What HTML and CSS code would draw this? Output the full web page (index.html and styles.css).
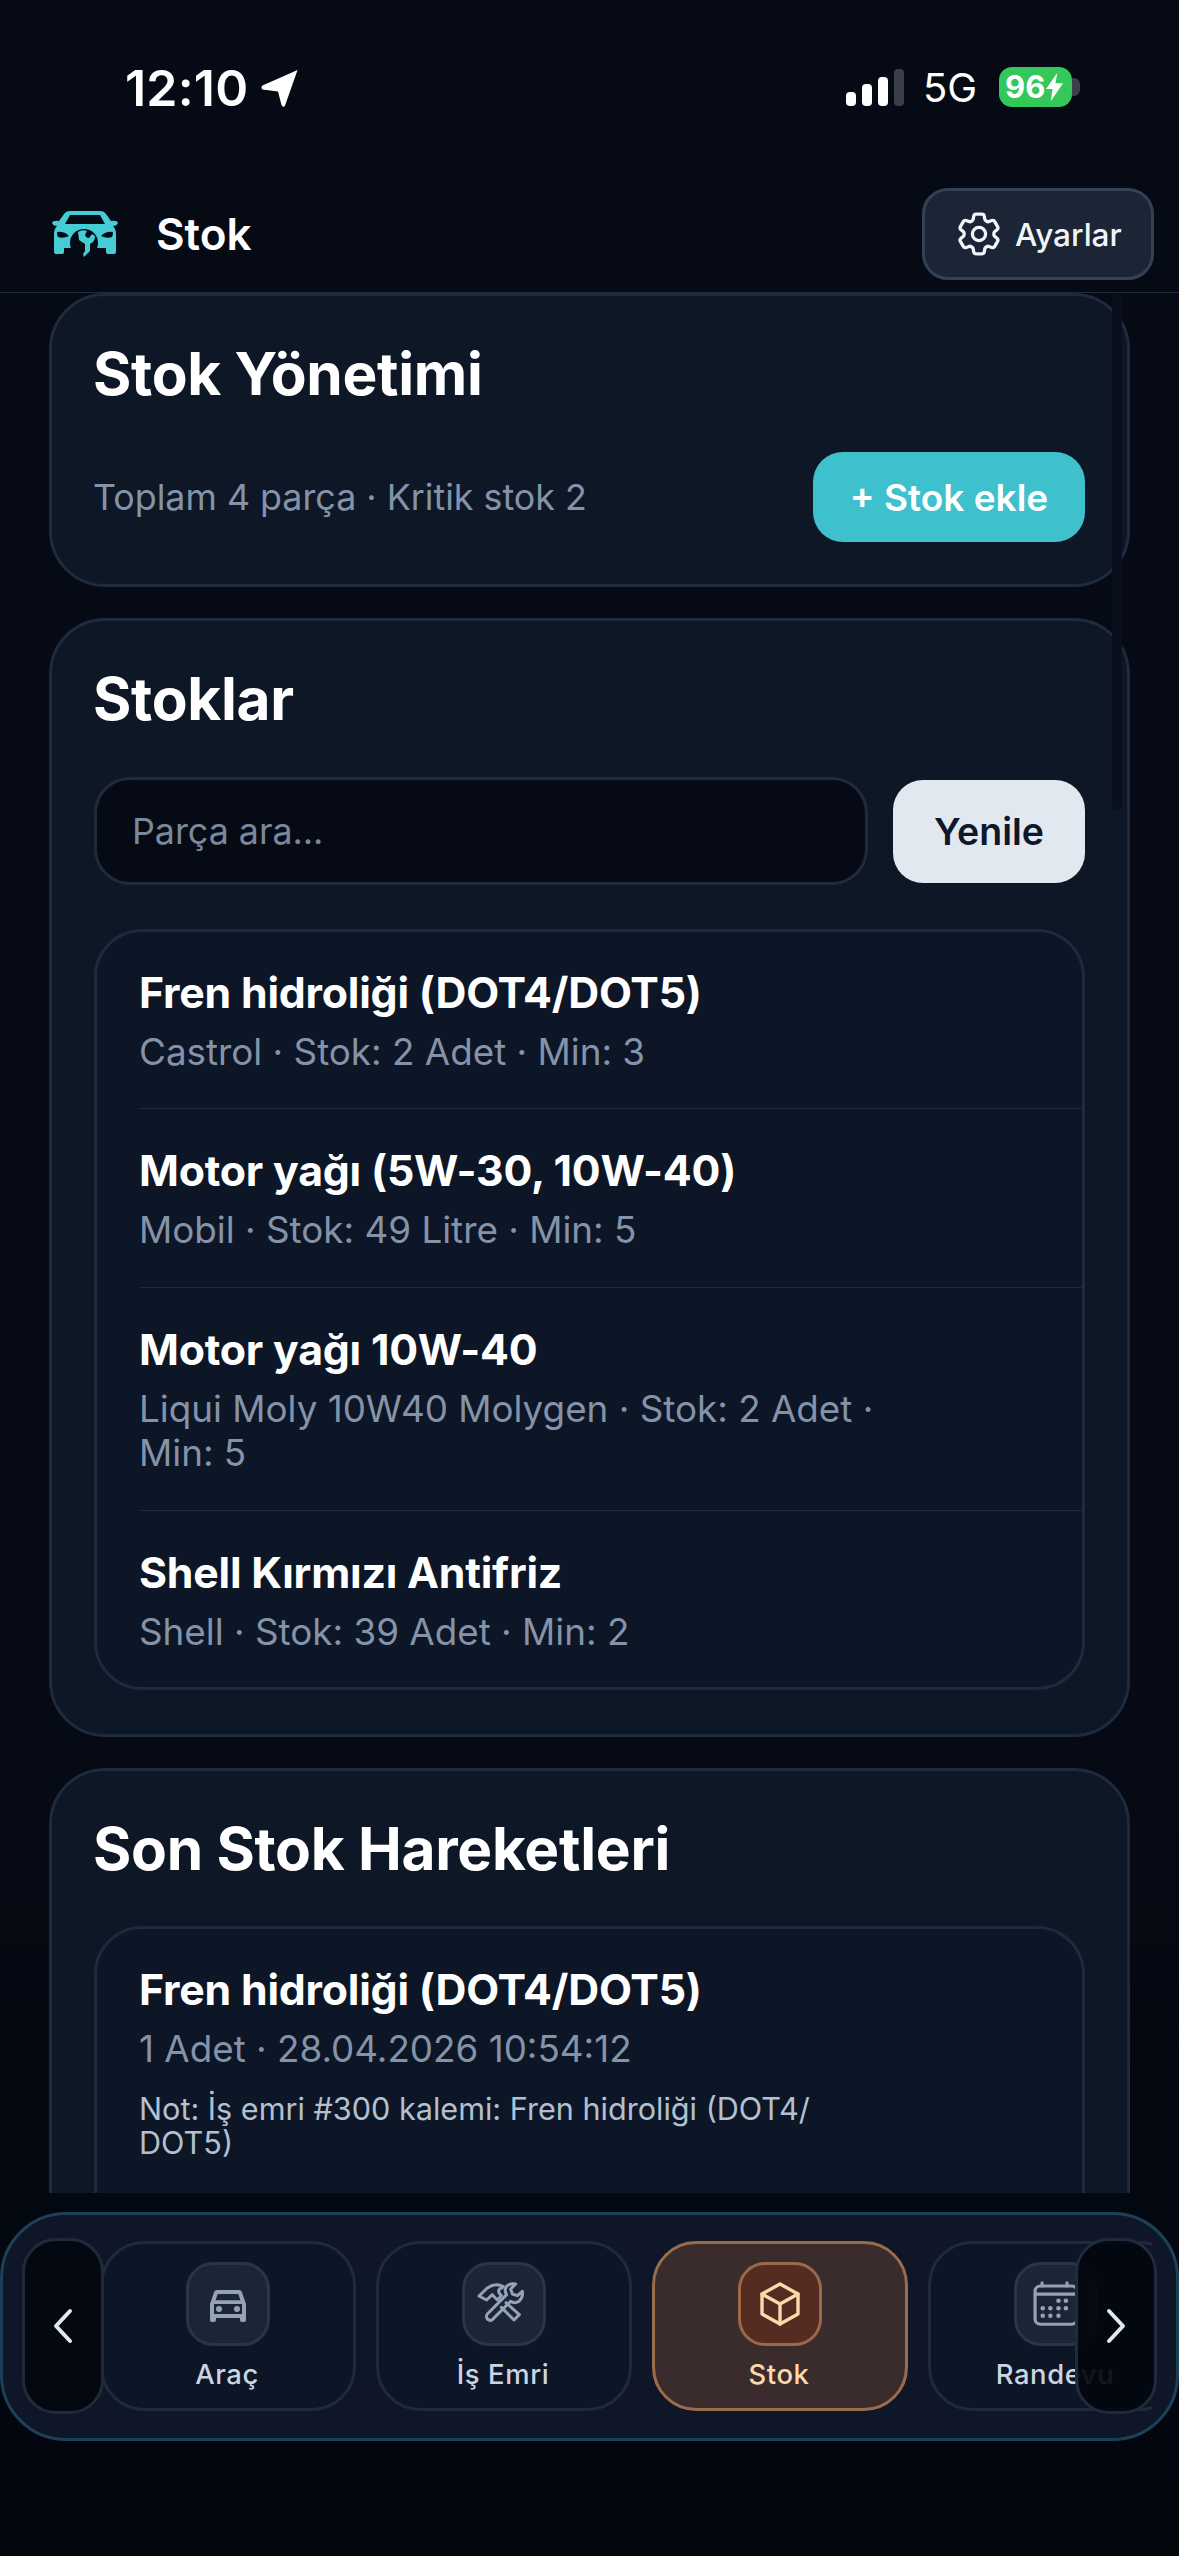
FILE: index.html
```html
<!DOCTYPE html>
<html lang="tr">
<head>
  <meta charset="UTF-8" />
  <meta name="viewport" content="width=device-width, initial-scale=1.0"/>
  <title>Stok</title>
  <link rel="stylesheet" href="styles.css">
</head>
<body>
  <div class="app">

    <!-- status bar -->
    <div class="status">
      <div class="status-left">
        <span class="clock">12:10</span>
        <svg class="loc" viewBox="0 0 40 40"><path d="M38 1 L25 38 Q23 40 21.500 37 L18 23 L2 21 Q0 19 2 17 Z" fill="#fff"/></svg>
      </div>
      <div class="status-right">
        <div class="signal">
          <span class="bar bar1"></span>
          <span class="bar bar2"></span>
          <span class="bar bar3"></span>
          <span class="bar bar4"></span>
        </div>
        <span class="net">5G</span>
        <div class="battery">
          <span class="batt-num">96</span>
          <svg class="bolt" viewBox="0 0 18 30"><path d="M12 0 L0 17 H7 L5 30 L18 11 H10 Z" fill="#fff"/></svg>
          <span class="batt-cap"></span>
        </div>
      </div>
    </div>

    <!-- top bar -->
    <header class="topbar">
      <div class="brand">
        <svg class="brand-logo" viewBox="0 0 66 46">
          <path fill="#45cdd6" fill-rule="evenodd" d="M18 0 H48 Q52 0 54 3 L59 10 Q65 9 66 12 Q65 15 61 15 Q64 18 64 23 V41 Q64 43 62 43 H56 Q54 43 54 41 V37 H12 V41 Q12 43 10 43 H4 Q2 43 2 41 V23 Q2 18 5 15 Q1 15 0 12 Q1 9 7 10 L12 3 Q14 0 18 0 Z M18 4 L13 13 H53 L48 4 Z M5 21 Q12 20 17 25 Q11 28 6 26 Q5 24 5 21 Z M61 21 Q54 20 49 25 Q55 28 60 26 Q61 24 61 21 Z"/>
          <circle cx="32" cy="32" r="14" fill="#050a14"/>
          <path fill="#45cdd6" d="M26 21 L27 29 L33 33 L33 40 L31 43 L32 46 L35 43 L38 40 L38 33 Q43 31 43 25 L40 23 L37 27 Q34 27 33 24 L35 20 Q30 18 26 21 Z"/>
        </svg>
        <span class="brand-name">Stok</span>
      </div>
      <button class="settings-btn">
        <svg class="gear" viewBox="2 2 20 20" fill="none" stroke="#f1f5f9" stroke-width="1.500" stroke-linejoin="round">
          <path d="M9.594 3.940c.09-.542.56-.94 1.110-.94h2.593c.55 0 1.020.398 1.110.94l.213 1.281c.063.374.313.686.645.870.074.04.147.083.22.127.325.196.72.257 1.075.124l1.217-.456a1.125 1.125 0 0 1 1.370.49l1.296 2.247a1.125 1.125 0 0 1-.26 1.431l-1.003.827c-.293.241-.438.613-.43.992a7.723 7.723 0 0 1 0 .255c-.008.378.137.75.43.991l1.004.827c.424.35.534.955.26 1.430l-1.298 2.247a1.125 1.125 0 0 1-1.369.491l-1.217-.456c-.355-.133-.75-.072-1.076.124a6.470 6.470 0 0 1-.22.128c-.331.183-.581.495-.644.869l-.213 1.281c-.09.543-.56.94-1.110.94h-2.594c-.55 0-1.019-.398-1.110-.94l-.213-1.281c-.062-.374-.312-.686-.644-.87a6.520 6.520 0 0 1-.22-.127c-.325-.196-.72-.257-1.076-.124l-1.217.456a1.125 1.125 0 0 1-1.369-.49l-1.297-2.247a1.125 1.125 0 0 1 .26-1.431l1.004-.827c.292-.24.437-.613.43-.991a6.932 6.932 0 0 1 0-.255c.007-.38-.138-.751-.43-.992l-1.004-.827a1.125 1.125 0 0 1-.26-1.430l1.297-2.247a1.125 1.125 0 0 1 1.370-.491l1.216.456c.356.133.751.072 1.076-.124.072-.044.146-.086.22-.128.332-.183.582-.495.644-.869l.214-1.280Z"/>
          <circle cx="12" cy="12" r="3"/>
        </svg>
        Ayarlar
      </button>
    </header>

    <!-- scrolling content -->
    <main class="content">
      <span class="scroll-thumb"></span>

      <section class="card">
        <h2>Stok Yönetimi</h2>
        <div class="summary">
          <p class="summary-text">Toplam 4 parça · Kritik stok 2</p>
          <button class="add-btn">+ Stok ekle</button>
        </div>
      </section>

      <section class="card">
        <h2>Stoklar</h2>
        <div class="search">
          <input class="search-input" type="text" placeholder="Parça ara..." />
          <button class="refresh-btn">Yenile</button>
        </div>
        <div class="list stock-list">
          <div class="row">
            <h3>Fren hidroliği (DOT4/DOT5)</h3>
            <p class="meta">Castrol · Stok: 2 Adet · Min: 3</p>
          </div>
          <div class="row">
            <h3>Motor yağı (5W-30, 10W-40)</h3>
            <p class="meta">Mobil · Stok: 49 Litre · Min: 5</p>
          </div>
          <div class="row">
            <h3>Motor yağı 10W-40</h3>
            <p class="meta">Liqui Moly 10W40 Molygen · Stok: 2 Adet · Min: 5</p>
          </div>
          <div class="row">
            <h3>Shell Kırmızı Antifriz</h3>
            <p class="meta">Shell · Stok: 39 Adet · Min: 2</p>
          </div>
        </div>
      </section>

      <section class="card">
        <h2>Son Stok Hareketleri</h2>
        <div class="list moves-list">
          <div class="row">
            <h3>Fren hidroliği (DOT4/DOT5)</h3>
            <p class="meta">1 Adet · 28.04.2026 10:54:12</p>
            <p class="note">Not: İş emri #300 kalemi: Fren hidroliği (DOT4/<wbr>DOT5)</p>
          </div>
        </div>
      </section>
    </main>

    <!-- bottom nav -->
    <nav class="dock">
      <div class="dock-scroll">
        <a class="tile">
          <span class="tile-icon">
            <svg viewBox="0 0 24 24" fill="#94a3b8"><path d="M18.920 6.010C18.720 5.420 18.160 5 17.500 5h-11c-.66 0-1.210.42-1.420 1.010L3 12v8c0 .55.45 1 1 1h1c.55 0 1-.45 1-1v-1h12v1c0 .55.45 1 1 1h1c.55 0 1-.45 1-1v-8l-2.080-5.990zM6.850 7h10.290l1.080 3.110H5.770L6.850 7zM19 17H5v-5h14v5z"/><circle cx="7.500" cy="14.500" r="1.500"/><circle cx="16.500" cy="14.500" r="1.500"/></svg>
          </span>
          <span class="tile-label">Araç</span>
        </a>
        <a class="tile">
          <span class="tile-icon">
            <svg viewBox="48 48 144 144" fill="none" stroke="#94a3b8" stroke-width="9" stroke-linejoin="round" stroke-linecap="round">
              <path d="M45 96 L70 72 Q95 55 118 68 L106 76 Q100 85 112 95 L100 108 L85 92 L68 108 Z"/>
              <path d="M126 116 L166 152 L150 168 L112 130"/>
              <path d="M128 92 Q118 75 130 65 Q140 57 155 60 L140 75 L145 90 L160 95 L175 82 Q178 100 165 112 Q152 120 140 112 L85 167 Q78 172 70 165 Q65 157 70 150 Z"/>
            </svg>
          </span>
          <span class="tile-label">İş Emri</span>
        </a>
        <a class="tile tile-active">
          <span class="tile-icon">
            <svg viewBox="0 0 24 24" fill="none" stroke="#fed7aa" stroke-width="1.700" stroke-linejoin="round" stroke-linecap="round">
              <path d="M12 2 L21 7 V17 L12 22 L3 17 V7 Z"/>
              <path d="M3 7 L12 12 L21 7 M12 12 V22"/>
            </svg>
          </span>
          <span class="tile-label">Stok</span>
        </a>
        <a class="tile">
          <span class="tile-icon">
            <svg class="icon-cal" viewBox="0 0 24 24" fill="none" stroke="#94a3b8" stroke-width="1.400" stroke-linecap="round" stroke-linejoin="round">
              <rect x="2.700" y="4" width="18.600" height="17" rx="2.300"/>
              <path d="M5.800 2.600V4M16.900 2.600V4M2.700 7.600H21.300"/>
              <g fill="#94a3b8" stroke="none"><circle cx="13.100" cy="10.500" r="1"/><circle cx="16.400" cy="10.500" r="1"/><circle cx="6.100" cy="13.900" r="1"/><circle cx="9.500" cy="13.900" r="1"/><circle cx="13.100" cy="13.900" r="1"/><circle cx="16.400" cy="13.900" r="1"/><circle cx="6.100" cy="17.200" r="1"/><circle cx="9.500" cy="17.200" r="1"/><circle cx="13.100" cy="17.200" r="1"/></g>
            </svg>
          </span>
          <span class="tile-label">Randevu</span>
        </a>
      </div>
      <button class="dock-arrow dock-prev">
        <svg viewBox="0 0 20 36" fill="none" stroke="#e2e8f0" stroke-width="4" stroke-linecap="round" stroke-linejoin="round"><path d="M17 3 L3 18 L17 33"/></svg>
      </button>
      <button class="dock-arrow dock-next">
        <svg viewBox="0 0 20 36" fill="none" stroke="#e2e8f0" stroke-width="4" stroke-linecap="round" stroke-linejoin="round"><path d="M3 3 L17 18 L3 33"/></svg>
      </button>
    </nav>
  </div>
</body>
</html>
```

FILE: styles.css
```css
* {
  box-sizing: border-box;
}
html, body {
  margin: 0;
  padding: 0;
}
body {
  font-family: Inter, "Noto Sans", sans-serif;
  background: #050a14;
  color: #fff;
}
h2, h3, p {
  margin: 0;
}
button {
  font-family: inherit;
  border: none;
  padding: 0;
}
.app {
  width: 1179px;
  height: 2556px;
  overflow: hidden;
  display: flex;
  flex-direction: column;
  background: linear-gradient(180deg, #050a14 0%, #050a14 70%, #02050c 100%);
}

/* status bar */
.status {
  height: 176px;
  flex: none;
  display: flex;
  justify-content: space-between;
  padding: 62px 107px 0 125px;
}
.status-left {
  display: flex;
  align-items: flex-start;
  gap: 12px;
}
.clock {
  font-size: 50px;
  font-weight: 600;
  line-height: 52px;
  letter-spacing: 0.200px;
}
.loc {
  width: 40px;
  height: 39px;
  margin-top: 7px;
}
.status-right {
  display: flex;
  align-items: flex-start;
  padding-top: 5px;
}
.signal {
  display: flex;
  align-items: flex-end;
  gap: 6px;
  height: 37px;
  margin-top: 2px;
}
.bar {
  width: 10px;
  border-radius: 4px;
  background: #fff;
}
.bar1 { height: 14px; }
.bar2 { height: 22px; }
.bar3 { height: 29px; }
.bar4 { height: 37px; background: #3a3f48; }
.net {
  width: 54px;
  font-size: 40px;
  line-height: 40px;
  margin: 1px 22px 0 19px;
  color: #fff;
}
.battery {
  position: relative;
  width: 73px;
  height: 40px;
  background: #34c759;
  border-radius: 13px;
  display: flex;
  align-items: center;
  padding-left: 6px;
  gap: 1px;
}
.batt-num {
  font-size: 31px;
  font-weight: 700;
  line-height: 40px;
}
.bolt {
  width: 17px;
  height: 30px;
}
.batt-cap {
  position: absolute;
  left: 73px;
  top: 11px;
  width: 8px;
  height: 18px;
  border-radius: 0 6px 6px 0;
  background: #3a3f48;
}

/* top bar */
.topbar {
  height: 117px;
  flex: none;
  display: flex;
  align-items: center;
  justify-content: space-between;
  padding: 0 25px 0 52px;
  border-bottom: 1px solid #1e293b;
}
.brand {
  display: flex;
  align-items: center;
  gap: 38px;
}
.brand-logo {
  width: 66px;
  height: 46px;
}
.brand-name {
  font-size: 44px;
  font-weight: 600;
}
.settings-btn {
  width: 232px;
  height: 92px;
  display: flex;
  align-items: center;
  gap: 14px;
  padding-left: 32px;
  background: #1b2535;
  border: 3px solid #334155;
  border-radius: 26px;
  color: #f1f5f9;
  font-size: 31.500px;
  font-weight: 500;
}
.gear {
  width: 44px;
  height: 44px;
}

/* content */
.content {
  position: relative;
  height: 1900px;
  flex: none;
  overflow: hidden;
  padding: 0 49px;
  display: flex;
  flex-direction: column;
  gap: 31px;
}
.scroll-thumb {
  position: absolute;
  top: 0;
  left: 1112px;
  width: 10px;
  height: 517px;
  border-radius: 5px;
  background: #090f1b;
}
.card {
  flex: none;
  padding: 43px 42px 44px;
  background: #0d1726;
  border: 3px solid #1e2a3d;
  border-radius: 56px;
}
.card h2 {
  margin-left: -1px;
  font-size: 58.600px;
  font-weight: 700;
  line-height: 70px;
  letter-spacing: -0.300px;
}
.summary {
  display: flex;
  align-items: center;
  justify-content: space-between;
  margin: 43px 0 -2px;
}
.summary-text {
  margin-left: -1px;
  font-size: 35.800px;
  color: #8493a8;
}
.add-btn {
  width: 272px;
  height: 90px;
  background: #3fc1cd;
  border-radius: 30px;
  color: #fff;
  font-size: 37px;
  font-weight: 600;
}
.search {
  display: flex;
  align-items: center;
  gap: 25px;
  margin-top: 43px;
}
.search-input {
  flex: 1;
  min-width: 0;
  height: 108px;
  padding: 0 35px;
  background: #060a14;
  border: 3px solid #1f2a3c;
  border-radius: 36px;
  font-family: inherit;
  font-size: 35.800px;
  color: #fff;
}
.search-input::placeholder {
  color: #7a889c;
  opacity: 1;
}
.refresh-btn {
  flex: none;
  width: 192px;
  height: 103px;
  background: #e2e8f0;
  border-radius: 30px;
  color: #0f172a;
  font-size: 37.500px;
  font-weight: 600;
}
.list {
  padding-left: 42px;
  background: #0c1626;
  border: 3px solid #1e2a3d;
  border-radius: 48px;
}
.stock-list {
  margin-top: 44px;
}
.moves-list {
  margin-top: 42px;
  min-height: 330px;
}
.row {
  padding: 37px 0 35px;
  border-bottom: 1px solid #1e2a3d;
}
.row:first-child {
  padding: 36px 0 34px;
}
.row:last-child {
  padding-bottom: 33px;
  border-bottom: none;
}
.row h3 {
  font-size: 42.800px;
  font-weight: 650;
  line-height: 50px;
  letter-spacing: -0.200px;
}
.meta {
  max-width: 745px;
  margin-top: 12px;
  font-size: 36.800px;
  line-height: 44px;
  color: #8493a8;
}
.note {
  max-width: 745px;
  margin-top: 21px;
  font-size: 30.600px;
  line-height: 34px;
  color: #b4c0d0;
}

/* dock */
.dock {
  position: relative;
  height: 229px;
  flex: none;
  margin-top: 19px;
  padding: 26px 24px;
  background: #0e1628;
  border: 3px solid #1c4058;
  border-radius: 66px;
}
.dock-scroll {
  display: flex;
  gap: 20px;
  width: 1125px;
  overflow: hidden;
  padding-left: 73px;
}
.tile {
  flex: none;
  width: 256px;
  height: 170px;
  display: flex;
  flex-direction: column;
  align-items: center;
  padding-top: 18px;
  background: #0c1627;
  border: 3px solid #1f2b3d;
  border-radius: 44px;
}
.tile-icon {
  width: 84px;
  height: 84px;
  display: flex;
  align-items: center;
  justify-content: center;
  background: #1b2536;
  border: 3px solid #2a3648;
  border-radius: 27px;
}
.tile-icon svg {
  flex: none;
  width: 48px;
  height: 48px;
  overflow: visible;
}
.tile-icon .icon-cal {
  width: 54px;
  height: 54px;
}
.tile-label {
  margin: 10px 2px 0 0;
  font-size: 27.400px;
  font-weight: 500;
  line-height: 36px;
  letter-spacing: 0.600px;
  color: #cbd5e1;
}
.tile-active {
  background: #3a2c2c;
  border-color: #9a6c4a;
}
.tile-active .tile-icon {
  background: #542c22;
  border-color: #9a6a48;
}
.tile-active .tile-label {
  color: #fed7aa;
}
.dock-arrow {
  position: absolute;
  top: 23px;
  width: 82px;
  height: 176px;
  display: flex;
  align-items: center;
  justify-content: center;
  background: rgba(3, 7, 15, 0.93);
  border: 3px solid #1f2b3d;
  border-radius: 34px;
}
.dock-arrow svg {
  width: 20px;
  height: 36px;
}
.dock-prev {
  left: 19px;
}
.dock-next {
  left: 1072px;
}
```
